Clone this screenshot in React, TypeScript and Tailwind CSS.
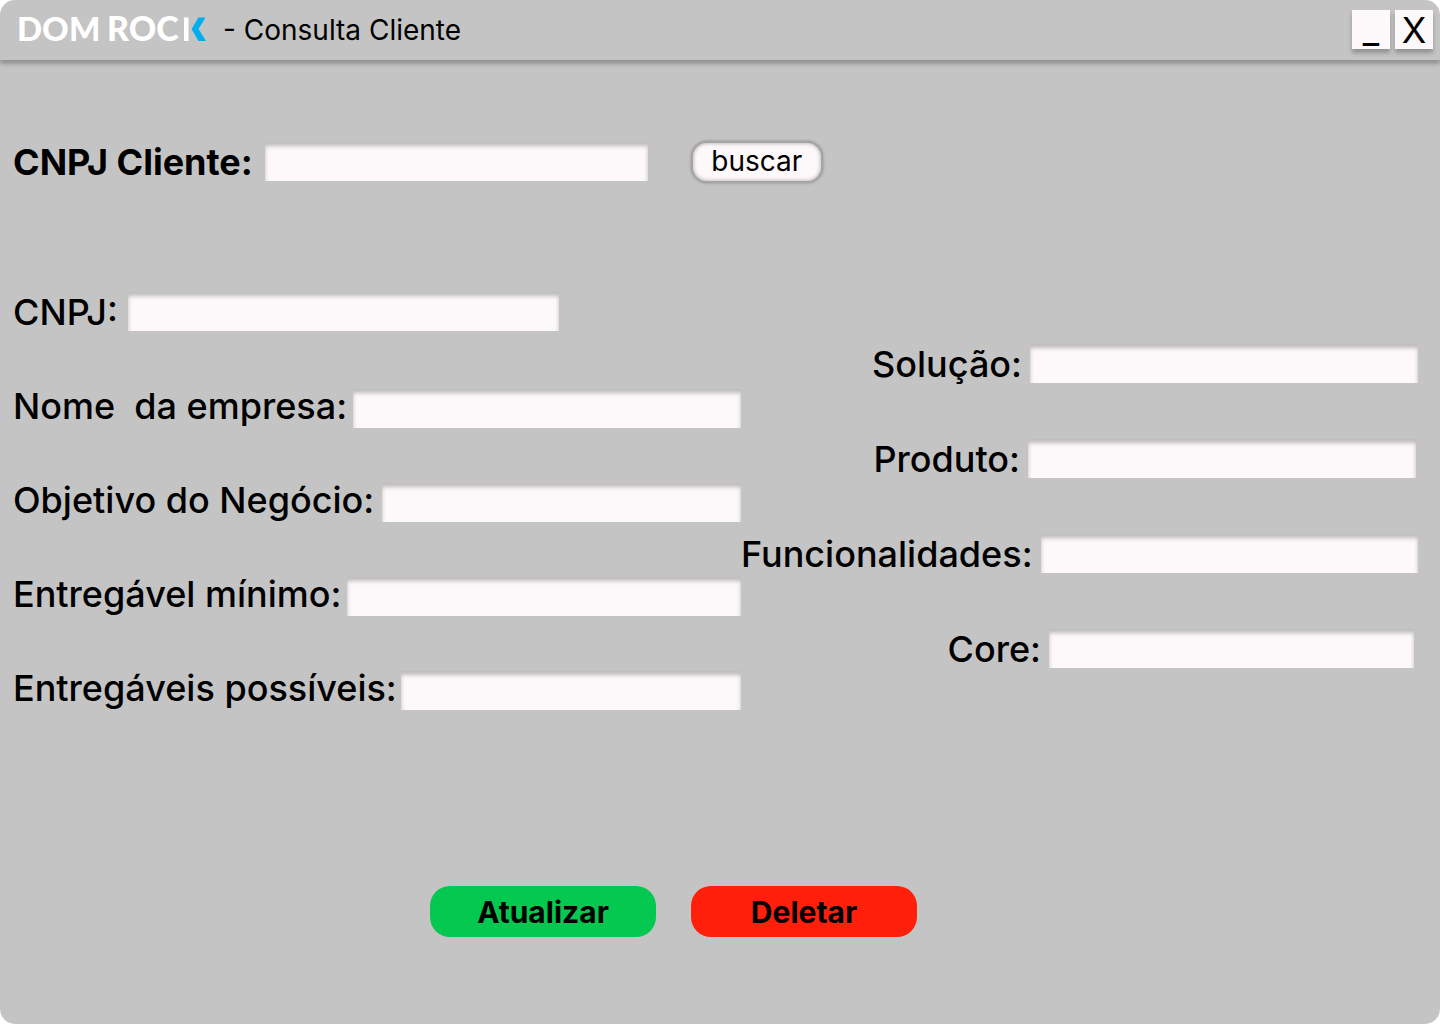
import { useId } from "react";

type FieldProps = {
  label: string;
  inputClass: string;
  rowClass?: string;
};

const inputBase =
  "h-[39px] min-w-0 bg-[#fdf9fa] px-2 text-2xl outline-none shadow-[inset_0_4px_4px_rgba(0,0,0,0.25)]";

function Field({ label, inputClass, rowClass = "items-center" }: FieldProps) {
  const id = useId();
  return (
    <div className={`flex ${rowClass}`}>
      <label
        htmlFor={id}
        className="shrink-0 text-4xl leading-[44px] font-medium whitespace-pre"
      >
        {label}
      </label>
      <input id={id} type="text" className={`${inputBase} ${inputClass}`} />
    </div>
  );
}

function Logo() {
  return (
    <svg
      width="190"
      height="40"
      viewBox="0 0 190 40"
      role="img"
      aria-label="Dom Rock"
      fontFamily="Lato, sans-serif"
      fontWeight="900"
      fill="#ffffff"
      className="overflow-visible"
    >
      <text x="-1" y="31" fontSize="33">DOM</text>
      <text x="89" y="31" fontSize="34">ROC</text>
      <rect x="166" y="7.500" width="4.500" height="23.500" />
      <path d="M180.500 7.500h7l-7 11.500 7.500 12h-7.500l-7-12z" fill="#00aeef" />
    </svg>
  );
}

const windowButton =
  "flex h-[39px] w-[38px] items-center justify-center bg-[#fdf9fa] text-4xl shadow-[0_4px_4px_rgba(0,0,0,0.25)]";

const actionButton =
  "h-[51px] w-[226px] rounded-[20px] text-3xl font-bold";

export default function App() {
  return (
    <div className="min-h-screen bg-white">
      <div className="flex min-h-screen flex-col overflow-hidden rounded-[15px] bg-[#c4c4c4] font-['Inter',sans-serif] text-black">
        <header className="flex h-[60px] shrink-0 items-center pr-[7px] pl-[18px] shadow-[0_4px_4px_rgba(0,0,0,0.25)]">
          <Logo />
          <h1 className="ml-[15px] text-[28px]">- Consulta Cliente</h1>
          <div className="mt-2.5 ml-auto flex gap-[5px] self-start">
            <button type="button" aria-label="Minimizar" className={windowButton}>
              _
            </button>
            <button type="button" aria-label="Fechar" className={windowButton}>
              X
            </button>
          </div>
        </header>

        <main className="pt-20">
          <form role="search" className="flex items-center pl-[13px]">
            <label
              htmlFor="cnpj-cliente"
              className="text-4xl leading-[44px] font-bold"
            >
              CNPJ Cliente:
            </label>
            <input
              id="cnpj-cliente"
              type="text"
              className={`${inputBase} mb-px ml-3 w-[383px]`}
            />
            <button
              type="button"
              className="ml-[43px] h-[42px] w-[132px] rounded-[16px] border-2 border-[#a6a5a5] bg-[#fdf9fa] pb-0.5 text-[28px] leading-8 shadow-[0_0_3px_rgba(0,0,0,0.3),inset_0_0_4px_rgba(0,0,0,0.35)]"
            >
              buscar
            </button>
          </form>

          <form>
            <div className="mt-[106px] grid grid-cols-[minmax(0,741fr)_minmax(0,699fr)]">
              <div className="flex flex-col gap-[50px] pl-[13px]">
                <Field label="CNPJ:" inputClass="mb-px ml-2.5 w-[431px]" />
                <Field label="Nome  da empresa:" rowClass="items-end" inputClass="ml-1.5 flex-1" />
                <Field label="Objetivo do Negócio:" rowClass="items-end" inputClass="ml-2 flex-1" />
                <Field label="Entregável mínimo:" rowClass="items-end" inputClass="ml-1.5 flex-1" />
                <Field label="Entregáveis possíveis:" rowClass="items-end" inputClass="ml-1 flex-1" />
              </div>
              <div className="flex flex-col gap-[51px] pt-[52px]">
                <Field label="Solução:" rowClass="items-center justify-end pr-[22px]" inputClass="mb-px ml-2 w-[388px]" />
                <Field label="Produto:" rowClass="items-center justify-end pr-6" inputClass="mb-px ml-2 w-[388px]" />
                <Field label="Funcionalidades:" rowClass="items-center justify-end pr-[22px]" inputClass="mb-px ml-2 w-[378px]" />
                <Field label="Core:" rowClass="items-center justify-end pr-[26px]" inputClass="mb-px ml-2 w-[365px]" />
              </div>
            </div>

            <div className="mt-44 flex justify-center gap-[35px] pr-[93px]">
              <button type="button" className={`${actionButton} bg-[#05c851]`}>
                Atualizar
              </button>
              <button type="button" className={`${actionButton} bg-[#ff1f0a]`}>
                Deletar
              </button>
            </div>
          </form>
        </main>
      </div>
    </div>
  );
}
